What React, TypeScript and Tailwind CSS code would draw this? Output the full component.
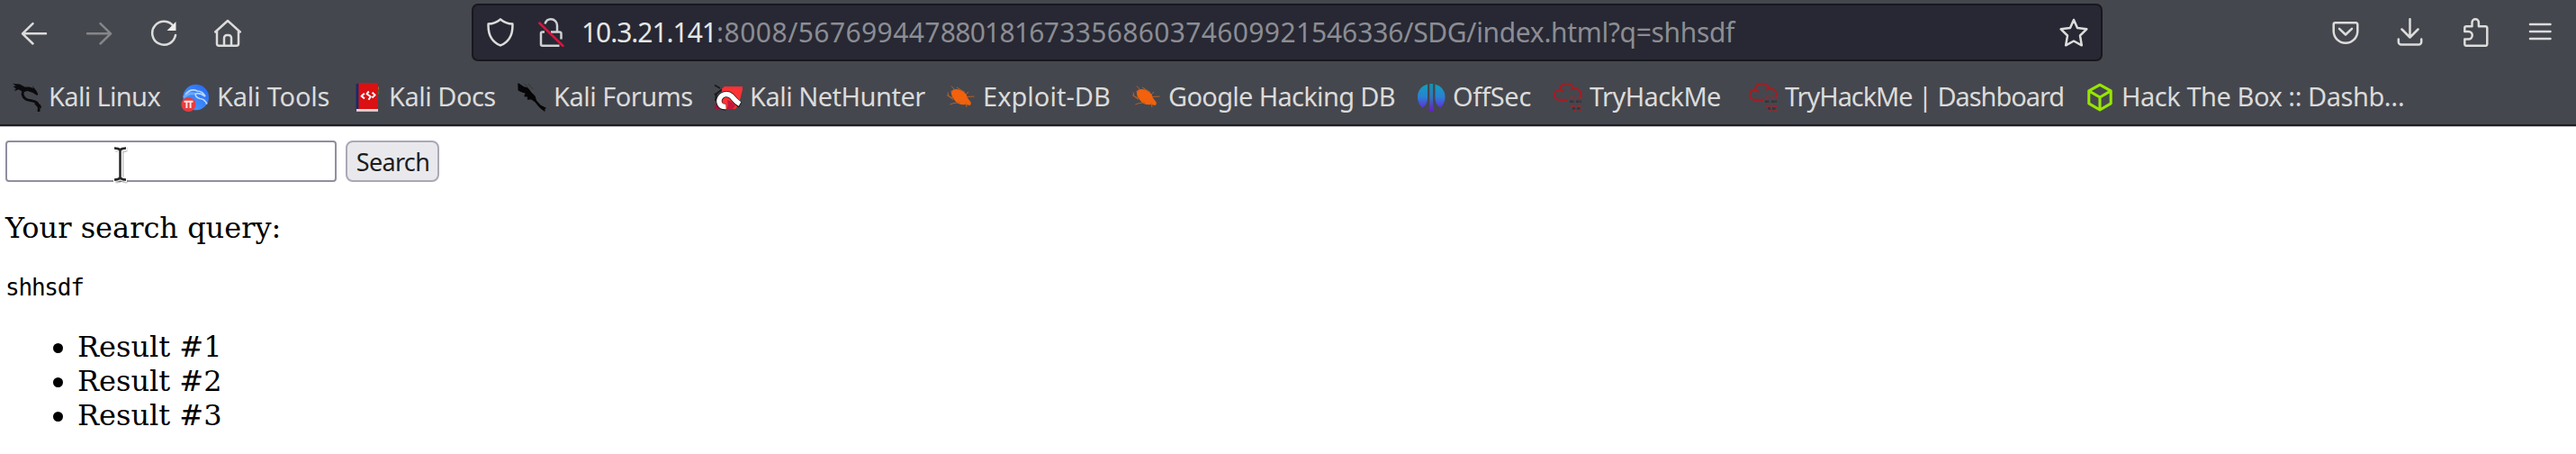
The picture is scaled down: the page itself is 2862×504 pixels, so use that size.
import React from 'react';

type IconProps = { children: React.ReactNode; className?: string };

/** Line icon in the toolbar's light grey. */
function Line({ children, className = '' }: IconProps) {
  return (
    <svg
      width="32"
      height="32"
      viewBox="0 0 32 32"
      fill="none"
      stroke="#dcdcdb"
      strokeWidth="2.5"
      strokeLinecap="round"
      strokeLinejoin="round"
      className={`shrink-0 ${className}`}
    >
      {children}
    </svg>
  );
}

function Glyph({ children }: { children: React.ReactNode }) {
  return (
    <svg width="32" height="32" viewBox="0 0 32 32" fill="none" className="shrink-0">
      {children}
    </svg>
  );
}

const Dragon = () => (
  <Glyph>
    <path d="M0 .8 8 1.5l6 3.2c4-.4 7 0 9 1.6l-1-3 4.6 5.6 1.6 3.6-1 1.6-4.6-3.2-6-1.8-5 1.2-5-3-4.6 2 1.6-2.4L0 7.6l4-1.2L.6 4l3.2-.8z" fill="#0b0b0d" />
    <path d="M13 7.6c-3.4 3.6-2 8.4 2 10.6 3.6 1.8 8 1.2 11.4 3.4 2.4 1.8 3.4 3.6 2.6 9.8" stroke="#0b0b0d" strokeWidth="2.8" strokeLinecap="round" />
    <path d="m26 22 5 4.6M24.6 22.6l4.6 5M30 24l1.6 4" stroke="#0b0b0d" strokeWidth="1.4" />
  </Glyph>
);

const Tools = () => (
  <Glyph>
    <defs>
      <linearGradient id="tools" x1="0" y1="1" x2="1" y2="0">
        <stop offset="0" stopColor="#4fa0ff" />
        <stop offset="1" stopColor="#2467f5" />
      </linearGradient>
    </defs>
    <circle cx="16.7" cy="16" r="14.3" fill="url(#tools)" />
    <path d="M5 13c4-5 9-6 13-4 3.400 0 7 2 9 6-4-3-8-4-11-3 0 3 1.500 4.500 5 5.500 3.500 0 6 2 8 6" stroke="#b9d8ff" strokeWidth="1.700" />
    <path d="M3 16c4-4 8-5 12-4" stroke="#8fc0ff" strokeWidth="3" opacity=".6" />
    <circle cx="8.400" cy="24" r="8" fill="#ea3b3f" />
    <path d="M3.500 20.700h10M6.400 21v7M10.600 21v7" stroke="#ffe9e6" strokeWidth="1.900" />
  </Glyph>
);

const Docs = () => (
  <Glyph>
    <path d="M26 2h2v6h1.500v5H28v6h-2z" fill="#4b5b45" />
    <path d="M26.500 4.500h2.400v3h-2.400z" fill="#c76b24" />
    <path d="M26.500 9.500h2v3h-2z" fill="#2f8a45" />
    <path d="M26.500 15.500h2v3.500h-2z" fill="#2a549c" />
    <path d="M3.600 1.500 7 0v29l-3.400 3z" fill="#122b6c" />
    <path d="M4 29h24v2.800H4z" fill="#efd5d5" />
    <path d="M6.400 0H26a2 2 0 0 1 2 2v27H6.400z" fill="#da1013" />
    <path d="m12.800 11.800-3.200 3 3.400 2.600M17.800 9.500l-2.300 2.700 4.300 3-2.300 3.600M21.600 10.800l3 2.800-3.200 3" stroke="#fff" strokeWidth="2" strokeLinejoin="round" />
  </Glyph>
);

const Forums = () => (
  <Glyph>
    <path d="m1 1 6 4 4 1 4 5 4 4 1.500 5 4.500 5 6 3-1.500 1 .5 2-5-4-5-6-5-3.500-3.500.5.500-3-4-.5 1.500-3L4 9.500 1.200 8z" fill="#060607" stroke="#060607" strokeWidth="1.300" strokeLinejoin="round" />
    <path d="m8 1 6 7M12 1l5 6" stroke="#33353a" strokeWidth="1" />
  </Glyph>
);

const NetHunter = () => (
  <Glyph>
    <path d="M1 2.500 7 6M3 14l-2-2M2 20l1-8 8-6" stroke="#1a1a1d" strokeWidth="2" />
    <path d="M9 6.500 12 4h19a1.500 1.500 0 0 1 1.400 2L27.500 25l-4 4H13l-4-6z" fill="#fb3236" />
    <path d="M1 23c2 1 4 3 6 6.500H2.500L1 28z" fill="#a5103c" />
    <path d="M15 19c4 1 7 3 9 7l-3 3-7 .5c2-3 2-6 1-10.500z" fill="#c4163a" />
    <path d="M13.500 27C6 27 4.500 21 7 16.500c3-4.500 8.500-5.500 13-1.500 3 3.500 5 7 9.500 9.500" stroke="#201015" strokeWidth="6.800" />
    <path d="M13.500 26.500C6.500 27 4.500 21 7 16.500c3-4.500 8.500-5.500 13-1.500 2.500 3 4.500 6 9 8.500" stroke="#fff" strokeWidth="5.400" />
  </Glyph>
);

const Bug = () => (
  <Glyph>
    <path d="M6 8.500c3-2.800 7.500-1.500 11 .5 4 2.500 5.500 4.500 5.500 7l4.500 6-1 3-6-1c-5 1-9.500-1.500-12-5.500C5 14 4 11 6 8.500z" fill="#f2610c" />
    <path d="M5 3.500 9 8M11 5l9 5.500M1 10.500 2.200 15 8 17M0 13.500l7 5M22 15.500l8.500-.5M3.500 24c4-1.800 7-2 11-2M21 22l1 5M7 8l-3 2M21 13l3-3" stroke="#b5602a" strokeWidth="1" />
  </Glyph>
);

const OffSec = () => (
  <Glyph>
    <defs>
      <linearGradient id="offsec" gradientUnits="userSpaceOnUse" x1="0" y1="0" x2="0" y2="31">
        <stop offset="0" stopColor="#0fa3b8" />
        <stop offset=".5" stopColor="#2b80d2" />
        <stop offset="1" stopColor="#6a1bdc" />
      </linearGradient>
    </defs>
    <path d="M12 1.500C5 3.500 1 9 1 15.500c0 5 2 9.500 5.500 12L9 25.500c2.200-3 3-5 3-10zM20.500 1.500c7 2 11 7.500 11 14 0 5-2 9.500-5.500 12l-2.500-2c-2.200-3-3-5-3-10z" fill="url(#offsec)" />
    <path d="M14.300 1h3.800v25l1 3.500a2.800 2.800 0 0 1-5.800 0l1-3.500z" fill="url(#offsec)" opacity=".85" />
  </Glyph>
);

const Cloud = () => (
  <Glyph>
    <path d="M16 18.800H6.500C3 18.800 1 16 1 13.300 1 10 3.500 8 6.800 8 7.500 3.500 10.500 1 14.500 1c4 0 7 2 8 5.500 4.500-.5 8 2 8 6.500 0 1.500-.5 2.500-1.300 3.200M6.800 8c2.200 0 3.500.8 4.500 2.200M22.500 6.500c-1.500 0-2.700.5-3.700 1.500" stroke="#a51c21" strokeWidth="2.200" />
    <path d="M18.500 16.300h5M26 16.300h2M30.500 14.500v4M19 25.800h5M26.500 25.800h5M22 31h4M28 31h3" stroke="#8e2a30" strokeWidth="2.400" strokeDasharray="3 .7" />
    <path d="M18 20.800h5M25 20.800h6M21 28.500h3M26 28.500h4" stroke="#373338" strokeWidth="2.400" strokeDasharray="3.500 .8" />
  </Glyph>
);

const Cube = () => (
  <Glyph>
    <path d="m16 2.200 12.200 6.600v14L16 30 3.800 22.800v-14zM3.800 8.800 16 16l12.200-7.200M16 16v14" stroke="#97e600" strokeWidth="3.100" strokeLinejoin="round" />
  </Glyph>
);

const bookmarks = [
  { icon: <Dragon />, label: 'Kali Linux', cls: 'w-[187px] tracking-[-0.65px]' },
  { icon: <Tools />, label: 'Kali Tools', cls: 'w-[191px] tracking-[-0.2px]' },
  { icon: <Docs />, label: 'Kali Docs', cls: 'w-[183px] tracking-[-0.5px]' },
  { icon: <Forums />, label: 'Kali Forums', cls: 'w-[218px] tracking-[-0.5px]' },
  { icon: <NetHunter />, label: 'Kali NetHunter', cls: 'w-[259px] tracking-[-0.5px]' },
  { icon: <Bug />, label: 'Exploit-DB', cls: 'w-[206px] tracking-[0.02px]' },
  { icon: <Bug />, label: 'Google Hacking DB', cls: 'w-[316px] tracking-[-0.68px]' },
  { icon: <OffSec />, label: 'OffSec', cls: 'w-[152px] tracking-[-0.3px]' },
  { icon: <Cloud />, label: 'TryHackMe', cls: 'w-[217px] tracking-[-0.6px]' },
  { icon: <Cloud />, label: 'TryHackMe | Dashboard', cls: 'w-[374px] tracking-[-1.07px]' },
  { icon: <Cube />, label: 'Hack The Box :: Dashb…', cls: 'tracking-[-0.46px]' },
];

function Toolbar() {
  return (
    <div className="flex h-[68px] items-start">
      <div className="flex w-[524px] gap-10 pl-[22px] pt-5">
        <Line>
          <path d="M29 17.300H3.500M14.500 6.200 3 17.300l11.500 11.200" />
        </Line>
        <Line>
          <path d="M3 17.300h25.500M17.500 6.200 29 17.300 17.500 28.500" stroke="#85868a" />
        </Line>
        <Line>
          <path d="M27 9.500A13 13 0 1 0 29 19" />
          <path d="M29.500 4v10h-10z" fill="#eeeeec" stroke="none" />
        </Line>
        <Line>
          <path d="M1.200 15.500 15 3l13.800 12.500M3 14v14.500a2.200 2.200 0 0 0 2.200 2.200h19.600a2.200 2.200 0 0 0 2.200-2.200V14M11 30.500V22a3 3 0 0 1 3-3h2a3 3 0 0 1 3 3v8.500" />
        </Line>
      </div>

      <div className="mt-1 flex h-16 w-[1812px] items-center rounded-[7px] border-2 border-[#17181d] bg-[#272833] px-[14px]">
        <Line className="mr-6">
          <path d="M16 1.400c4 3.200 8.500 4.800 13.400 5.200.6 12-3.800 19.800-13.400 23.800C6.400 26.400 2 18.600 2.600 6.600 7.500 6.200 12 4.600 16 1.400z" />
        </Line>
        <Line className="mr-[18px]">
          <path d="M9.500 6.500C10.500 3 13 1.300 16 1.300c4 0 7 3 7 7v7M9 15.500H6.500A1.500 1.500 0 0 0 5 17v12.200a1.500 1.500 0 0 0 1.500 1.500h19M16 15.500h9.500A2 2 0 0 1 27.500 17.500v6" stroke="#d0d0d3" strokeLinecap="butt" />
          <path d="M3.300 5.500 29.500 31" stroke="#d3173f" />
        </Line>
        <div className="flex whitespace-pre text-[30px] leading-[40px] text-[#8c8d93]">
          <span className="tracking-[-1.04px] text-[#e6e6e6]">10.3.21.141</span>
          <span className="tracking-[0.5px]">:8008/</span>
          <span className="tracking-[0.4px]">567699447</span>
          <span className="tracking-[-0.75px]">8801816</span>
          <span className="tracking-[0.35px]">7335686037460992</span>
          <span className="tracking-[-0.1px]">1546336</span>
          <span className="tracking-[-0.34px]">/SDG/index.html?q=shhsdf</span>
        </div>
        <Line className="ml-auto">
          <path d="m16 2 4 9 10.300 1.300-7.300 7.200 1.800 10.800L16 25.500l-8.800 4.800L9 19.500l-7.300-7.200L12 11z" />
        </Line>
      </div>

      <div className="ml-auto flex gap-10 pr-6 pt-5">
        <Line>
          <path d="M4.500 5.300h23a1.800 1.800 0 0 1 1.800 1.800v7.400a13.300 13.300 0 0 1-26.600 0V7.100a1.800 1.800 0 0 1 1.800-1.800zM9 11.800l7 6.700 7-6.700" />
        </Line>
        <Line>
          <path d="M15.500 1.200v20M6.500 12.500l9 9 9-9M2.800 23.500v3a3 3 0 0 0 3 3h19.400a3 3 0 0 0 3-3v-3" />
        </Line>
        <Line>
          <path d="M4.300 15V11a1.800 1.800 0 0 1 1.800-1.800h6.400V5a3.700 3.700 0 0 1 7.400 0v4.200h7.600A1.800 1.800 0 0 1 29.300 11v18a1.800 1.800 0 0 1-1.800 1.800H6.100A1.800 1.800 0 0 1 4.300 29v-5.500h4.200a4.200 4.200 0 0 0 0-8.500z" />
        </Line>
        <Line>
          <path d="M5 7h22.500M5 15h22.500M5 23h22.500" />
        </Line>
      </div>
    </div>
  );
}

export default function App() {
  return (
    <div className="h-[504px] w-[2862px] overflow-hidden bg-white">
      <header className="h-[141px] border-b border-[#bcbcbe] bg-[#45474e] font-['Noto_Sans',sans-serif]">
        <div className="h-[140px] border-b-2 border-[#1d1e22]">
          <Toolbar />
          <nav className="flex h-14 items-end pl-[14px]">
            {bookmarks.map((b) => (
              <a key={b.label} className={`flex h-8 shrink-0 items-center gap-2 whitespace-nowrap text-[29px] leading-[30px] text-[#dbdbda] ${b.cls}`}>
                {b.icon}
                <span className="pb-[2px]">{b.label}</span>
              </a>
            ))}
          </nav>
        </div>
      </header>

      <main className="pl-[6px] pt-[15px] font-['DejaVu_Serif',serif] text-[32px] leading-[38px] text-black">
        <form className="relative flex gap-[10px]" onSubmit={(e) => e.preventDefault()}>
          <input type="text" className="h-[46px] w-[368px] rounded-[4px] border-2 border-[#8f8f9d] bg-white px-1 outline-none" />
          <button className="h-[46px] w-[104px] rounded-[8px] border-2 border-[#a9a9b5] bg-[#e9e9ed] pl-px pt-px font-['Noto_Sans',sans-serif] text-[27px] leading-[40px] tracking-[-0.7px] text-[#1c1c1c]">
            Search
          </button>
          <svg width="24" height="44" viewBox="0 0 24 44" fill="none" className="pointer-events-none absolute left-[116px] top-[5px]">
            <path d="M5 3.500c3 0 5 .5 6.500 2.500C13 4 15 3.500 18 3.500M5 38.500c3 0 5-.5 6.500-2.500 1.500 2 3.500 2.500 6.500 2.500M11.500 5v32" transform="translate(1.500 1.500)" stroke="#000" strokeOpacity=".22" strokeWidth="5" />
            <path d="M4 3.500c3.500 0 6 .5 7.500 2.500C13 4 15.500 3.500 19 3.500M4 38.500c3.500 0 6-.5 7.500-2.500 1.500 2 4 2.500 7.500 2.500M11.500 5v32" stroke="#fff" strokeWidth="5" />
            <path d="M5 3.500c3 0 5 .5 6.500 2C13 4 15 3.500 18 3.500M5 38.500c3 0 5-.5 6.500-2 1.500 1.500 3.500 2 6.500 2M11.500 5v32" stroke="#262626" strokeWidth="2.500" />
          </svg>
        </form>
        <p className="mt-8">Your search query:</p>
        <pre className="mt-8 font-['DejaVu_Sans_Mono',monospace] text-[26px] leading-[30px] tracking-[-1.2px]">shhsdf</pre>
        <ul className="mt-8">
          {[1, 2, 3].map((n) => (
            <li key={n} className="flex items-center pl-[53px]">
              <span className="mr-[16px] mt-[2px] size-[11px] rounded-full bg-black" />
              Result #{n}
            </li>
          ))}
        </ul>
      </main>
    </div>
  );
}
